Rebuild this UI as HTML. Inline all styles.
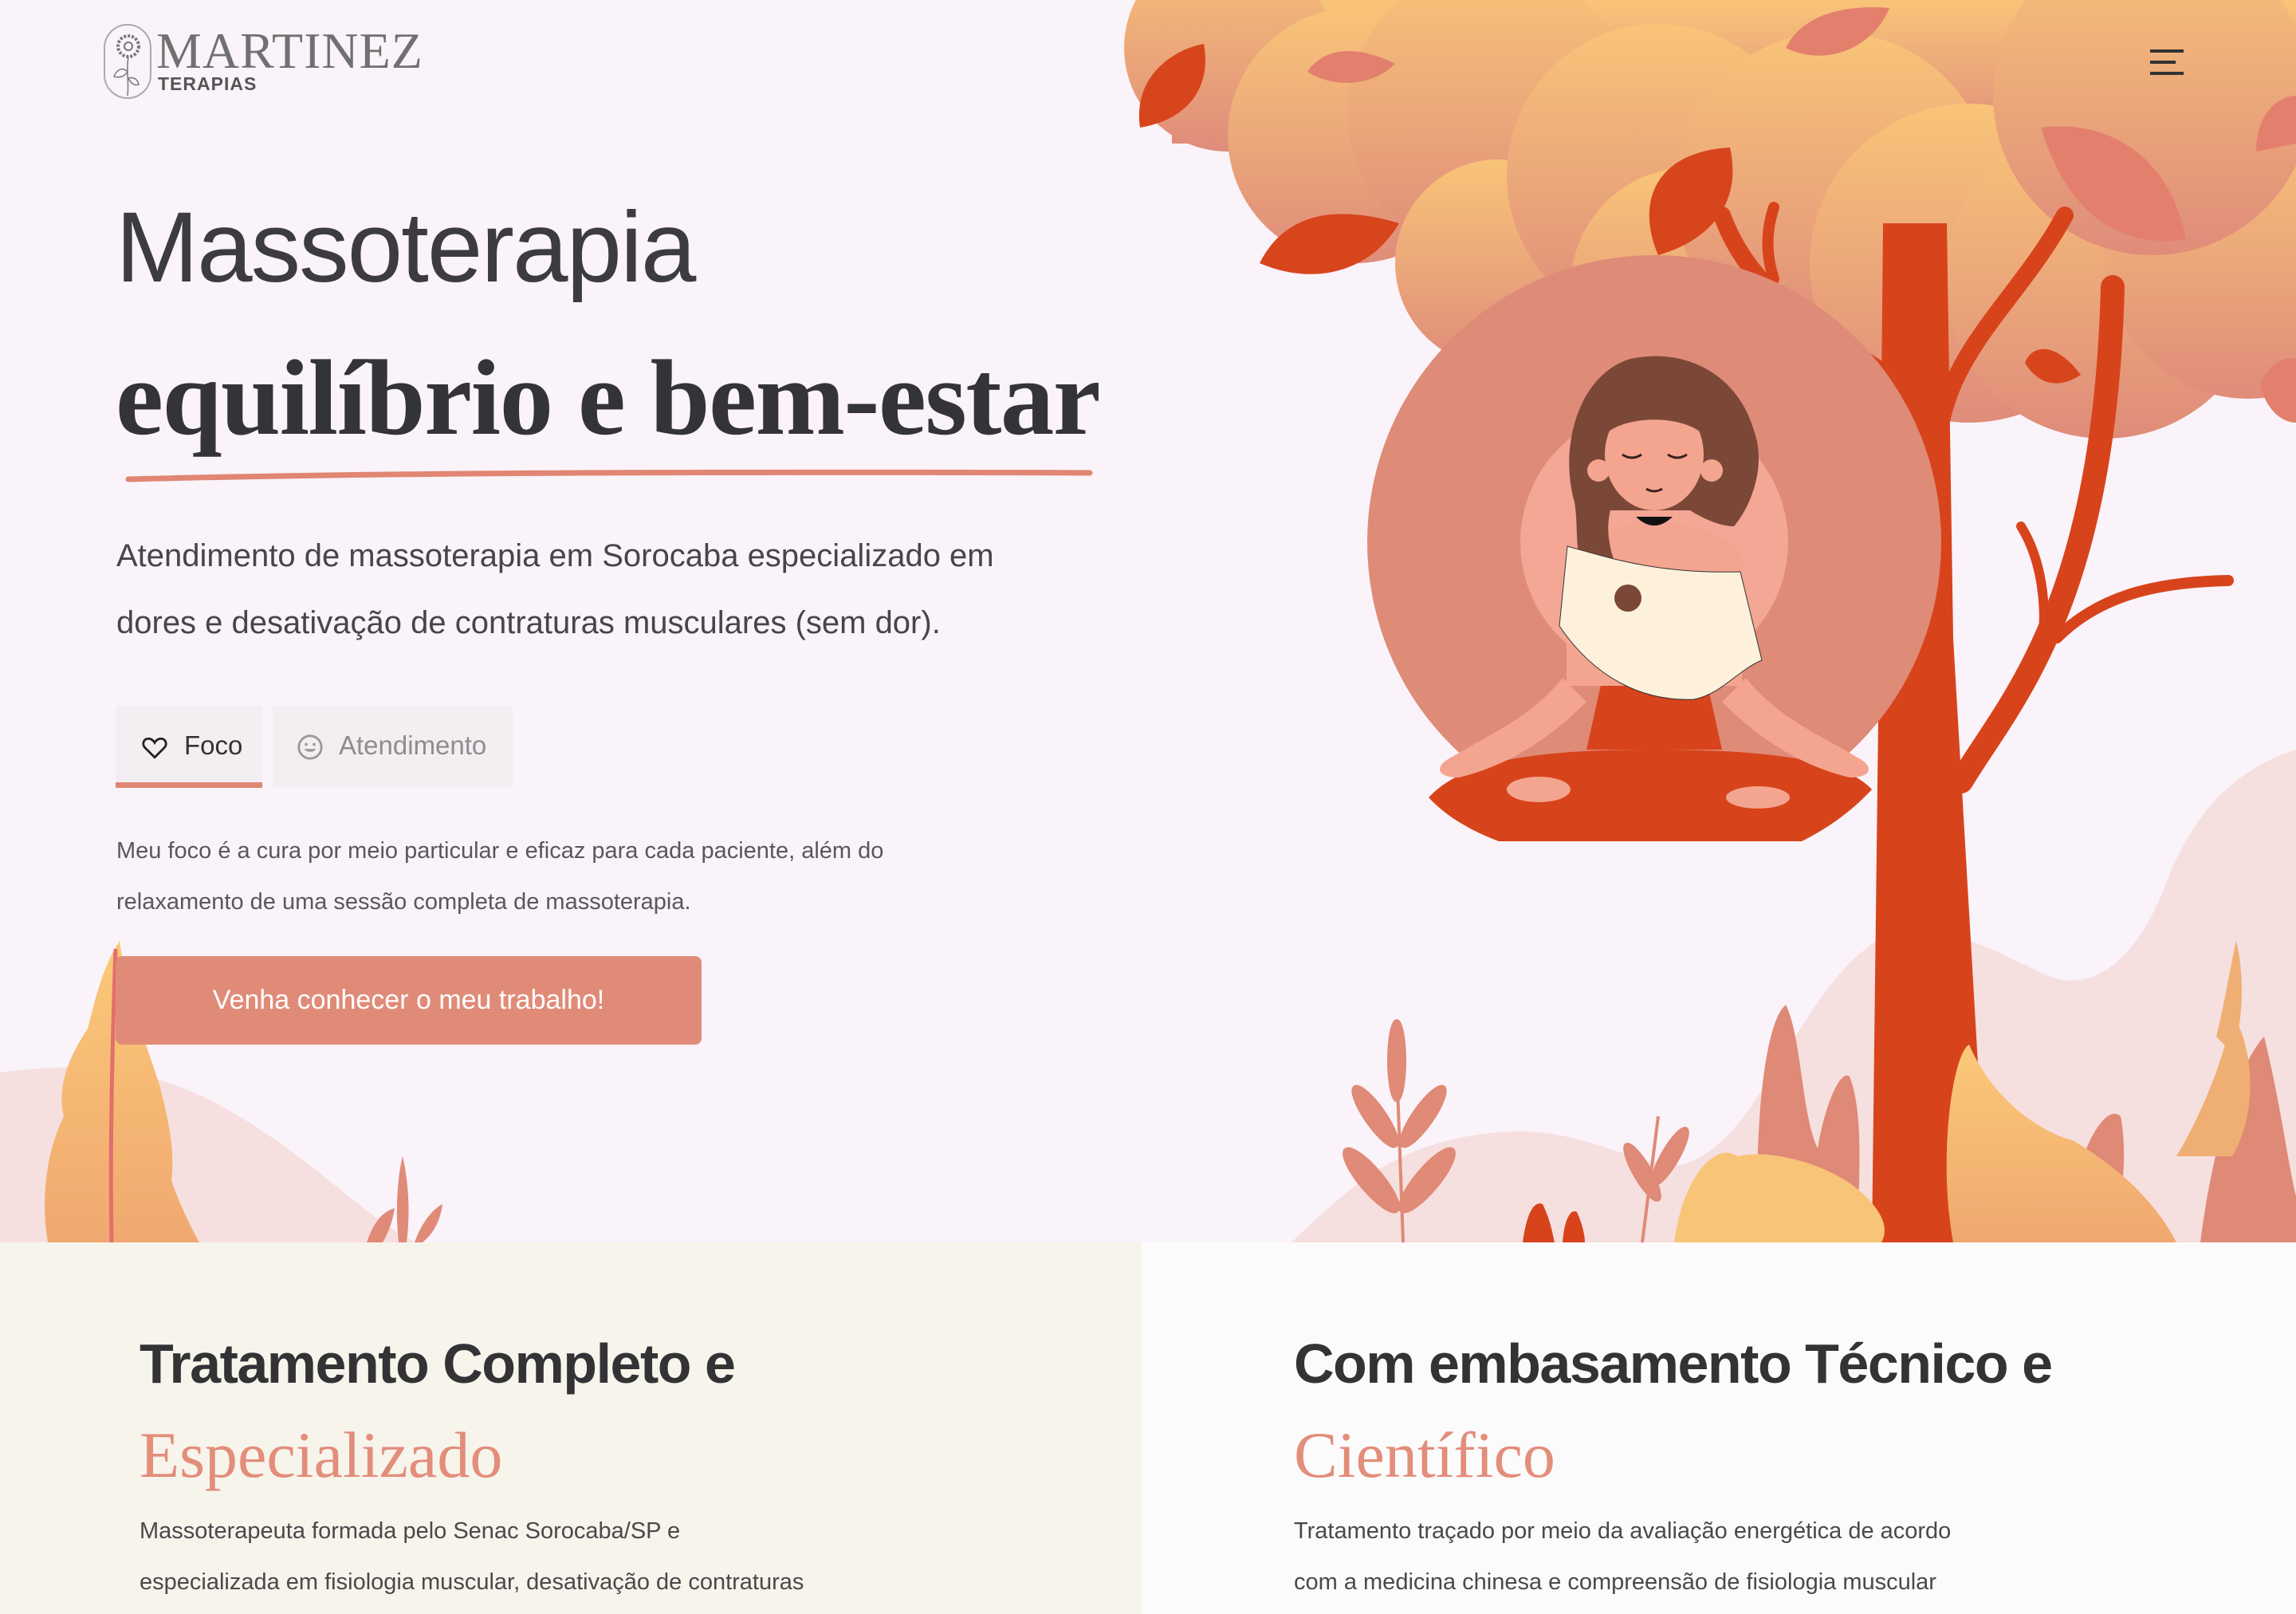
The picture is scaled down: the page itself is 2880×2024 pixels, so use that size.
<!DOCTYPE html>
<html><head><meta charset="utf-8"><style>
*{margin:0;padding:0;box-sizing:border-box}
body{width:2880px;height:2024px;overflow:hidden;background:#fcfbfc;font-family:"Liberation Sans",sans-serif;position:relative}
.hero{position:absolute;left:0;top:0;width:2880px;height:1558px;background:#faf3f9;overflow:hidden}
.abs{position:absolute}
</style></head><body>
<div class="hero">
<svg class="abs" style="left:0;top:0" width="2880" height="1558" viewBox="0 0 2880 1558">
<defs>
<linearGradient id="cg" x1="0" y1="0" x2="0" y2="1"><stop offset="0" stop-color="#f9c479"/><stop offset="1" stop-color="#df8c7a"/></linearGradient>
<linearGradient id="yl" x1="0" y1="0" x2="0" y2="1"><stop offset="0" stop-color="#fbc978"/><stop offset="1" stop-color="#f0a870"/></linearGradient>
</defs>
<path d="M0 1345 C120 1330 200 1340 300 1400 C400 1460 450 1520 520 1558 L0 1558Z" fill="#f6dfdf"/>
<path d="M1620 1558 C1700 1480 1760 1430 1880 1420 C1990 1410 2060 1470 2110 1460 C2200 1440 2250 1260 2340 1190 C2400 1140 2480 1180 2560 1220 C2620 1250 2680 1210 2720 1100 C2760 1000 2820 960 2880 940 L2880 1558Z" fill="#f6dfdf"/>
<g fill="url(#cg)">
<rect x="1470" y="0" width="1410" height="180"/>
<circle cx="1540" cy="60" r="130"/>
<circle cx="1700" cy="170" r="160"/>
<circle cx="1870" cy="140" r="180"/>
<circle cx="1880" cy="330" r="130"/>
<circle cx="2080" cy="220" r="190"/>
<circle cx="2120" cy="360" r="150"/>
<circle cx="2300" cy="240" r="200"/>
<circle cx="2470" cy="330" r="200"/>
<circle cx="2640" cy="350" r="200"/>
<circle cx="2820" cy="320" r="180"/>
<circle cx="2700" cy="120" r="200"/>
</g>
<g fill="#d7451d">
<path d="M1430 160 C1420 90 1480 60 1510 55 C1520 110 1490 150 1430 160Z"/>
<path d="M1580 330 C1610 270 1670 255 1755 280 C1720 340 1650 360 1580 330Z"/>
<path d="M2080 320 C2050 250 2080 190 2170 185 C2185 250 2150 300 2080 320Z"/>
<path d="M2540 455 C2550 430 2580 430 2610 470 C2580 490 2555 480 2540 455Z"/>
</g>
<g fill="#e2806d">
<path d="M1640 90 C1660 60 1700 55 1750 80 C1720 110 1670 110 1640 90Z"/>
<path d="M2240 60 C2260 20 2310 5 2370 10 C2350 60 2290 85 2240 60Z"/>
<path d="M2560 160 C2640 150 2720 190 2742 300 C2680 310 2600 290 2560 160Z"/>
<path d="M2830 190 C2830 140 2860 120 2880 120 L2880 180Z"/>
<path d="M2835 480 C2850 450 2870 448 2880 450 L2880 530 C2860 530 2840 510 2835 480Z"/>
</g>
<g fill="#d7441c" stroke="#d7441c" stroke-linecap="round">
<path d="M2362 280 L2442 280 L2450 800 L2494 1558 L2348 1558 L2356 900Z" stroke="none"/>
<path d="M2380 480 C2300 420 2200 380 2160 270" fill="none" stroke-width="22"/>
<path d="M2225 350 C2215 320 2215 290 2225 260" fill="none" stroke-width="14"/>
<path d="M2430 560 C2440 440 2530 380 2590 270" fill="none" stroke-width="22"/>
<path d="M2460 980 C2520 880 2640 760 2650 360" fill="none" stroke-width="30"/>
<path d="M2580 800 C2640 740 2720 730 2795 728" fill="none" stroke-width="14"/>
<path d="M2560 820 C2570 760 2560 700 2535 660" fill="none" stroke-width="12"/>
</g>
<circle cx="2075" cy="680" r="360" fill="#de8b78"/>
<circle cx="2075" cy="680" r="168" fill="#f3a794"/>
<path d="M1792 1000 C1830 960 1900 940 2075 940 C2250 940 2320 960 2348 990 C2320 1020 2290 1040 2260 1055 L1880 1055 C1840 1040 1810 1020 1792 1000Z" fill="#d7441c"/>
<path d="M1960 850 C1920 900 1870 920 1820 950 C1800 960 1800 975 1830 975 C1890 960 1940 930 1990 880Z" fill="#f4a590"/>
<path d="M2190 850 C2230 900 2280 920 2330 950 C2350 960 2350 975 2320 975 C2260 960 2210 930 2160 880Z" fill="#f4a590"/>
<path d="M2010 850 L2140 850 L2160 940 L1990 940Z" fill="#d7441c"/>
<ellipse cx="1930" cy="990" rx="40" ry="16" fill="#f4a590"/>
<ellipse cx="2205" cy="1000" rx="40" ry="14" fill="#f4a590"/>
<path d="M1965 700 C2000 640 2150 640 2185 700 L2185 860 L1965 860Z" fill="#f4a590"/>
<path d="M1975 630 C1955 560 1980 470 2045 450 C2115 435 2180 470 2200 540 C2215 580 2200 630 2175 660 C2150 660 2120 640 2120 640 L2020 640 C2010 680 2030 710 2035 740 C2020 750 1995 740 1985 710 C1975 690 1980 660 1975 630Z" fill="#7b4838"/>
<ellipse cx="2075" cy="570" rx="62" ry="70" fill="#f4a590"/>
<path d="M2013 520 C2030 490 2120 490 2137 520 L2137 545 C2110 520 2040 520 2013 545Z" fill="#7b4838"/>
<circle cx="2005" cy="590" r="14" fill="#f4a590"/><circle cx="2147" cy="590" r="14" fill="#f4a590"/>
<path d="M2035 570 q12 8 24 0 M2092 570 q12 8 24 0 M2065 613 q10 6 20 0" stroke="#3a2020" stroke-width="3" fill="none"/>
<path d="M2052 648 q23 22 46 0Z" fill="#111"/>
<path d="M1966 685 C2020 700 2080 720 2183 717 L2210 828 C2180 840 2160 870 2125 877 C2060 880 2000 850 1956 785Z" fill="#fdf1dc" stroke="#333" stroke-width="1"/>
<circle cx="2042" cy="750" r="17" fill="#7b4838"/>
<g fill="#df8a76">
<path d="M2205 1558 C2200 1400 2215 1280 2240 1260 C2260 1300 2260 1400 2280 1440 C2290 1380 2310 1340 2320 1350 C2340 1400 2330 1500 2330 1558Z"/>
<path d="M2590 1558 C2600 1450 2640 1380 2660 1400 C2670 1450 2660 1520 2650 1558Z"/>
<path d="M2760 1558 C2780 1400 2820 1320 2840 1300 C2860 1380 2870 1460 2880 1500 L2880 1558Z"/>
</g>
<path d="M2450 1558 C2430 1450 2450 1320 2470 1310 C2500 1380 2560 1420 2600 1430 C2650 1460 2700 1500 2730 1558Z" fill="url(#yl)"/>
<path d="M2100 1558 C2110 1480 2150 1430 2180 1450 C2220 1440 2300 1460 2340 1500 C2360 1520 2370 1540 2360 1558Z" fill="#f8c578"/>
<path d="M2730 1450 C2760 1400 2790 1330 2800 1270 C2830 1320 2830 1400 2800 1450Z" fill="#efaf74"/>
<path d="M2780 1300 C2790 1260 2800 1200 2805 1180 C2815 1220 2815 1280 2800 1320Z" fill="#efaf74"/>
<g stroke="#df8a76" stroke-width="4" fill="#e08a78">
<path d="M1760 1558 L1750 1280" fill="none"/>
<ellipse cx="1752" cy="1330" rx="10" ry="50"/>
<ellipse cx="1725" cy="1400" rx="12" ry="45" transform="rotate(-35 1725 1400)"/>
<ellipse cx="1785" cy="1400" rx="12" ry="45" transform="rotate(35 1785 1400)"/>
<ellipse cx="1720" cy="1480" rx="14" ry="50" transform="rotate(-40 1720 1480)"/>
<ellipse cx="1790" cy="1480" rx="14" ry="50" transform="rotate(40 1790 1480)"/>
<path d="M2060 1558 L2080 1400" fill="none"/>
<ellipse cx="2060" cy="1470" rx="10" ry="40" transform="rotate(-30 2060 1470)"/>
<ellipse cx="2095" cy="1450" rx="10" ry="40" transform="rotate(30 2095 1450)"/>
</g>
<path d="M1910 1558 C1915 1520 1925 1505 1935 1510 C1945 1530 1948 1550 1950 1558Z" fill="#d7441c"/>
<path d="M1960 1558 C1962 1530 1970 1515 1978 1520 C1985 1535 1988 1550 1988 1558Z" fill="#d7441c"/>
<path d="M60 1558 C50 1500 60 1440 80 1400 C70 1360 90 1320 110 1290 C120 1250 130 1210 150 1180 C160 1250 180 1300 200 1360 C210 1400 220 1440 215 1480 C225 1510 240 1540 250 1558Z" fill="url(#yl)"/>
<path d="M140 1558 C138 1450 140 1330 145 1190" stroke="#e26e6d" stroke-width="5" fill="none"/>
<path d="M500 1558 C495 1510 500 1470 505 1450 C512 1480 515 1520 510 1558Z" fill="#e08a78"/>
<path d="M460 1558 C470 1530 480 1520 495 1515 C492 1535 485 1550 480 1558Z M520 1558 C530 1530 545 1515 555 1510 C552 1535 540 1550 530 1558Z" fill="#e08a78"/>
</svg>

<svg class="abs" style="left:128px;top:28px" width="70" height="98" viewBox="0 0 70 98">
<rect x="3" y="3" width="58" height="92" rx="29" fill="none" stroke="#aaa" stroke-width="2"/>
<circle cx="33" cy="30" r="13" fill="none" stroke="#777" stroke-width="4" stroke-dasharray="3 2"/>
<circle cx="33" cy="30" r="5" fill="none" stroke="#777" stroke-width="2"/>
<path d="M33 43 C30 60 34 75 32 92 M32 62 C25 55 18 60 15 68 C22 70 28 68 32 62 M33 70 C40 68 45 72 46 78 C40 80 36 76 33 70" fill="none" stroke="#777" stroke-width="1.5"/>
</svg>
<div class="abs" style="left:196px;top:32px;font-family:'Liberation Serif',serif;font-size:64px;color:#707070;letter-spacing:1px;line-height:1">MARTINEZ</div>
<div class="abs" style="left:198px;top:94px;font-size:23px;font-weight:bold;color:#555;letter-spacing:1px;line-height:1">TERAPIAS</div>

<div class="abs" style="left:2697px;top:62px;width:42px;height:4px;background:#333"></div>
<div class="abs" style="left:2697px;top:76px;width:32px;height:4px;background:#333"></div>
<div class="abs" style="left:2697px;top:90px;width:42px;height:4px;background:#333"></div>

<div class="abs" style="left:145px;top:248px;font-size:125px;color:#3c3c40;line-height:1;letter-spacing:-2px">Massoterapia</div>
<div class="abs" style="left:145px;top:432px;font-family:'Liberation Serif',serif;font-weight:bold;font-size:135px;color:#343438;line-height:1;letter-spacing:-1.5px">equilíbrio e bem-estar</div>
<svg class="abs" style="left:155px;top:585px" width="1220" height="24"><path d="M6 16 C300 8 700 6 1212 8" stroke="#e08672" stroke-width="7" fill="none" stroke-linecap="round"/></svg>

<div class="abs" style="left:146px;top:655px;width:1250px;font-size:40px;line-height:84px;color:#464548">Atendimento de massoterapia em Sorocaba especializado em<br>dores e desativação de contraturas musculares (sem dor).</div>

<div class="abs" style="left:145px;top:885px;width:184px;height:103px;background:#f3eef2"></div>
<div class="abs" style="left:145px;top:981px;width:184px;height:7px;background:#e08672"></div>
<div class="abs" style="left:342px;top:885px;width:301px;height:103px;background:#f3eef2"></div>
<svg class="abs" style="left:176px;top:920px" width="36" height="34" viewBox="0 0 24 24"><path d="M12 21 L3.5 12.5 C1 10 1.5 5.5 5.5 4.5 C8 4 10.5 5.5 12 8 C13.5 5.5 16 4 18.5 4.5 C22.5 5.5 23 10 20.5 12.5Z" fill="none" stroke="#222" stroke-width="2"/></svg>
<div class="abs" style="left:231px;top:916px;font-size:33px;color:#333">Foco</div>
<svg class="abs" style="left:372px;top:920px" width="34" height="34" viewBox="0 0 24 24"><circle cx="12" cy="12" r="10" fill="none" stroke="#999" stroke-width="2"/><circle cx="8.5" cy="9.5" r="1.3" fill="#999"/><circle cx="15.5" cy="9.5" r="1.3" fill="#999"/><path d="M7 13.5 C8 17 16 17 17 13.5Z" fill="#999"/></svg>
<div class="abs" style="left:425px;top:916px;font-size:33px;color:#8e8c8f">Atendimento</div>

<div class="abs" style="left:146px;top:1035px;width:1300px;font-size:29px;line-height:64px;color:#59575a">Meu foco é a cura por meio particular e eficaz para cada paciente, além do<br>relaxamento de uma sessão completa de massoterapia.</div>

<div class="abs" style="left:145px;top:1199px;width:735px;height:111px;background:#e08b78;border-radius:8px;color:#fff;font-size:34px;text-align:center;line-height:111px">Venha conhecer o meu trabalho!</div>
</div>

<div class="abs" style="left:0;top:1558px;width:1431px;height:466px;background:#f7f4eb"></div>
<div class="abs" style="left:175px;top:1675px;font-size:70px;font-weight:bold;color:#333336;line-height:1;letter-spacing:-1.5px">Tratamento Completo e</div>
<div class="abs" style="left:175px;top:1784px;font-family:'Liberation Serif',serif;font-size:82px;color:#e38d7b;line-height:1">Especializado</div>
<div class="abs" style="left:175px;top:1888px;width:1200px;font-size:29px;line-height:64px;color:#4a484b">Massoterapeuta formada pelo Senac Sorocaba/SP e<br>especializada em fisiologia muscular, desativação de contraturas</div>

<div class="abs" style="left:1623px;top:1675px;font-size:70px;font-weight:bold;color:#333336;line-height:1;letter-spacing:-1.5px">Com embasamento Técnico e</div>
<div class="abs" style="left:1623px;top:1784px;font-family:'Liberation Serif',serif;font-size:82px;color:#e38d7b;line-height:1">Científico</div>
<div class="abs" style="left:1623px;top:1888px;width:1200px;font-size:29px;line-height:64px;color:#4a484b">Tratamento traçado por meio da avaliação energética de acordo<br>com a medicina chinesa e compreensão de fisiologia muscular</div>
</body></html>
